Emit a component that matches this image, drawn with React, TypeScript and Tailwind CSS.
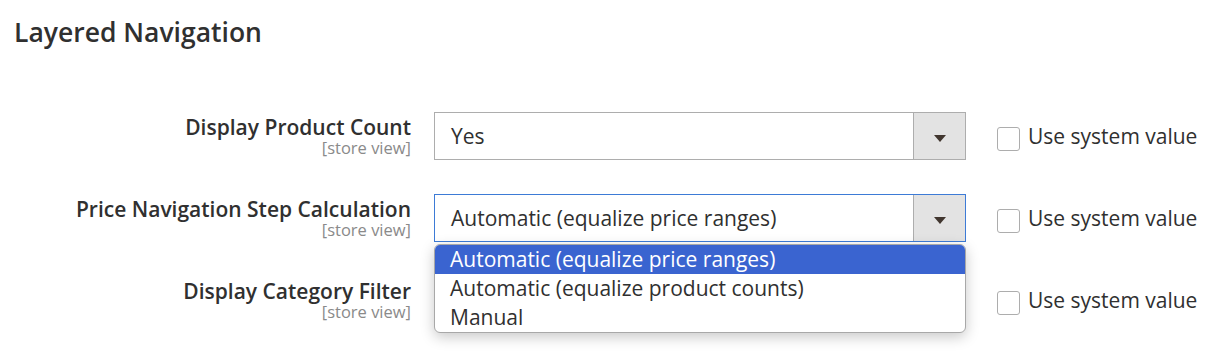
import React from "react";

type Row = {
  label: string;
  value: string;
  focused?: boolean;
  options?: string[];
};

const rows: Row[] = [
  { label: "Display Product Count", value: "Yes" },
  {
    label: "Price Navigation Step Calculation",
    value: "Automatic (equalize price ranges)",
    focused: true,
    options: [
      "Automatic (equalize price ranges)",
      "Automatic (equalize product counts)",
      "Manual",
    ],
  },
  // value is covered by the open list above, so nothing to show
  { label: "Display Category Filter", value: "" },
];

const SelectBox: React.FC<{ row: Row }> = ({ row }) => {
  return (
    <div className="relative w-[532px] h-[48px]">
      <div
        className={`flex h-full w-full border bg-white ${
          row.focused ? "border-[#3d7bd6]" : "border-[#adadad]"
        }`}
      >
        <div className="flex-1 flex items-center pl-[16px] pt-[2px] text-[21px] text-[#303030]">
          {row.value}
        </div>
        <div className="w-[52px] h-full flex items-center justify-center bg-[#e3e3e3] border-l border-[#adadad]">
          <svg width="12" height="7" viewBox="0 0 12 7" className="mt-[4px]">
            <path d="M0 0 H12 L6 7 Z" fill="#41362f" />
          </svg>
        </div>
      </div>

      {row.options && (
        <div className="absolute left-0 top-[50px] z-10 w-[532px] bg-white border border-[#a8a8a8] rounded-[6px] overflow-hidden shadow-[0_4px_14px_rgba(0,0,0,0.22)]">
          {row.options.map((opt, i) => (
            <div
              key={opt}
              className={`h-[29px] flex items-center pl-[15px] text-[21px] ${
                i === 0 ? "bg-[#3a64d0] text-white" : "text-[#303030]"
              }`}
            >
              {opt}
            </div>
          ))}
        </div>
      )}
    </div>
  );
};

export default function App() {
  return (
    <div
      className="w-full h-[356px] bg-white overflow-hidden"
      style={{ fontFamily: '"Open Sans", "Liberation Sans", sans-serif' }}
    >
      <h2 className="pl-[14px] pt-[17px] text-[26.5px] leading-[31px] font-semibold text-[#303030]">
        Layered Navigation
      </h2>

      <div className="mt-[64px] flex flex-col gap-[34px]">
        {rows.map((row) => (
          <div key={row.label} className="flex items-start">
            <div className="w-[411px] text-right pt-[4px]">
              <div className="text-[21px] leading-[22px] font-semibold text-[#303030]">
                {row.label}
              </div>
              <div className="mt-[1px] text-[16.5px] leading-[18px] text-[#8a8a8a]">
                [store view]
              </div>
            </div>

            <div className="ml-[23px]">
              <SelectBox row={row} />
            </div>

            <div className="ml-[31px] flex items-start">
              <div className="mt-[15px] w-[23px] h-[24px] rounded-[3px] border border-[#adadad] bg-white" />
              <span className="ml-[8px] mt-[12px] text-[21px] leading-[24px] text-[#303030]">
                Use system value
              </span>
            </div>
          </div>
        ))}
      </div>
    </div>
  );
}
